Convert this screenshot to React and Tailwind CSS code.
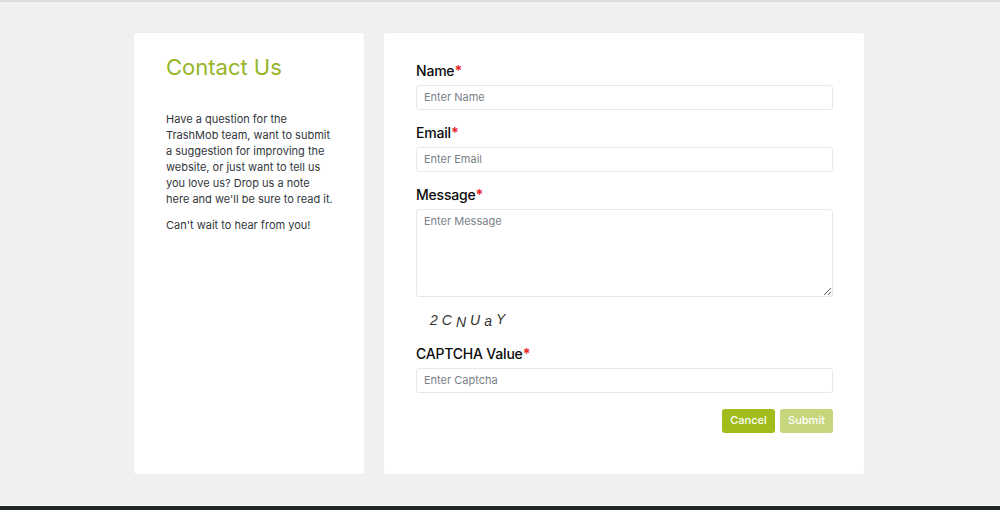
import React from "react";

function Label({ children }) {
  return (
    <label className="block h-[24px] text-[14px] leading-[22px] font-medium tracking-[-0.2px] text-[#0b0b0b]">
      {children}
      <span className="font-bold text-[#e8262a]">*</span>
    </label>
  );
}

function Field({ label, placeholder, className = "" }) {
  return (
    <div className={className}>
      <Label>{label}</Label>
      <input
        placeholder={placeholder}
        className="mt-[1px] block h-[25px] w-full rounded-[3px] border border-[#e6e8ea] bg-white px-[7px] pb-[1px] text-[11px] text-[#333] placeholder:text-[#7b8188] outline-none"
      />
    </div>
  );
}

export default function App() {
  return (
    <div className="flex h-[510px] w-full flex-col overflow-hidden bg-[#f0f0f0] font-['Inter',sans-serif]">
      <div className="h-[2px] shrink-0 bg-[#dcdcdc]" />
      <main className="flex flex-1 justify-center gap-[20px] pt-[31px] pr-[2px]">
        <section className="h-[441px] w-[230px] rounded-[3px] bg-white pr-[30px] pl-[32px] pt-[20px] shadow-[0_0_2px_rgba(0,0,0,0.03)]">
          <h1 className="text-[22px] leading-[28px] font-normal text-[#96b52a]">Contact Us</h1>
          <p className="mt-[30px] text-[11px] leading-[16px] text-[#33373d]">
            Have a question for the TrashMob team, want to submit a suggestion for improving the website, or just want to tell us you love us? Drop us a note here and we'll be sure to read it.
          </p>
          <p className="mt-[10px] text-[11px] leading-[16px] text-[#33373d]">Can't wait to hear from you!</p>
        </section>

        <section className="h-[441px] w-[480px] rounded-[3px] bg-white pr-[31px] pl-[32px] pt-[27px] shadow-[0_0_2px_rgba(0,0,0,0.03)]">
          <Field label="Name" placeholder="Enter Name" />
          <Field label="Email" placeholder="Enter Email" className="mt-[12px]" />
          <div className="mt-[12px]">
            <Label>Message</Label>
            <textarea
              placeholder="Enter Message"
              className="mt-[1px] block h-[88px] w-full rounded-[3px] border border-[#e6e8ea] bg-white px-[7px] py-[3px] text-[11px] text-[#333] placeholder:text-[#7b8188] outline-none"
            />
          </div>
          <div className="mt-[13px] flex h-[20px] items-center gap-[4px] pl-[14px] font-['Liberation_Sans',sans-serif] text-[14px] italic leading-none text-[#333]">
            <span>2</span>
            <span>C</span>
            <span className="translate-y-[2px]">N</span>
            <span>U</span>
            <span className="translate-y-[1px]">a</span>
            <span className="-translate-y-[1px]">Y</span>
          </div>
          <Field label="CAPTCHA Value" placeholder="Enter Captcha" className="mt-[13px]" />
          <div className="mt-[16px] flex justify-end gap-[5px]">
            <button className="h-[24px] w-[53px] rounded-[3px] bg-[#a0bd1c] pb-[2px] text-[11px] font-medium text-white">Cancel</button>
            <button className="h-[24px] w-[53px] rounded-[3px] bg-[#c6d77b] pb-[2px] text-[11px] font-medium text-white">Submit</button>
          </div>
        </section>
      </main>
      <div className="h-[1px] shrink-0 bg-white" />
      <div className="h-[4px] shrink-0 bg-[#22272a]" />
    </div>
  );
}
